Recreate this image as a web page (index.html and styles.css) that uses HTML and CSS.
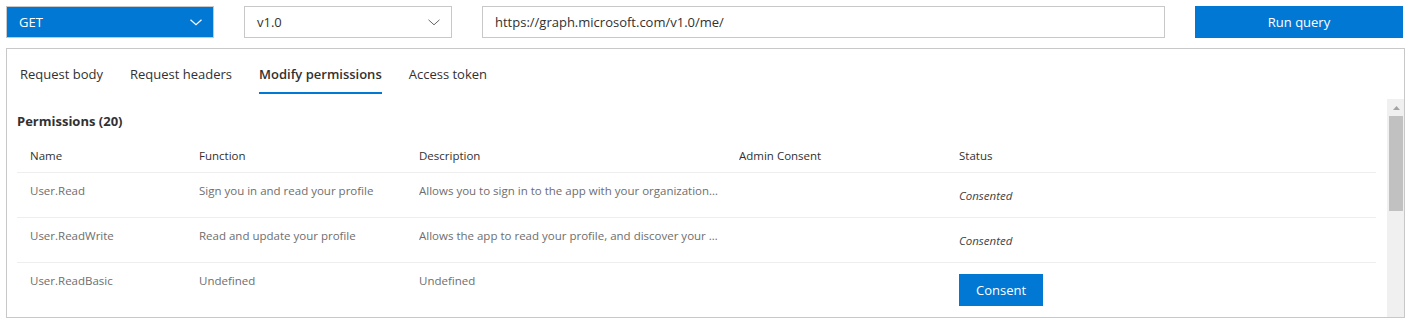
FILE: index.html
```html
<!DOCTYPE html>
<html lang="en">
<head>
<meta charset="utf-8">
<title>Graph Explorer</title>
<link rel="stylesheet" href="styles.css">
</head>
<body>
<div class="app">
  <div class="querybar">
    <div class="dropdown method">
      <span>GET</span>
      <svg class="chev" width="12" height="7" viewBox="0 0 12 7"><polyline points="0.5,0.8 6,5.8 11.5,0.8" fill="none" stroke="#ffffff" stroke-width="1.2"/></svg>
    </div>
    <div class="dropdown version">
      <span>v1.0</span>
      <svg class="chev" width="12" height="7" viewBox="0 0 12 7"><polyline points="0.5,0.8 6,5.8 11.5,0.8" fill="none" stroke="#666666" stroke-width="1"/></svg>
    </div>
    <div class="url">https://graph.microsoft.com/v1.0/me/</div>
    <button class="run">Run query</button>
  </div>

  <div class="panel">
    <div class="tabs">
      <div class="tab">Request body</div>
      <div class="tab">Request headers</div>
      <div class="tab active">Modify permissions</div>
      <div class="tab">Access token</div>
    </div>
    <div class="body">
      <div class="content">
        <div class="perm-title">Permissions (20)</div>
        <div class="table">
          <div class="row head">
            <div class="cell">Name</div>
            <div class="cell">Function</div>
            <div class="cell">Description</div>
            <div class="cell">Admin Consent</div>
            <div class="cell">Status</div>
          </div>
          <div class="row">
            <div class="cell">User.Read</div>
            <div class="cell">Sign you in and read your profile</div>
            <div class="cell desc">Allows you to sign in to the app with your organization…</div>
            <div class="cell"></div>
            <div class="cell status"><span class="consented">Consented</span></div>
          </div>
          <div class="row">
            <div class="cell">User.ReadWrite</div>
            <div class="cell">Read and update your profile</div>
            <div class="cell desc">Allows the app to read your profile, and discover your …</div>
            <div class="cell"></div>
            <div class="cell status"><span class="consented">Consented</span></div>
          </div>
          <div class="row last">
            <div class="cell">User.ReadBasic</div>
            <div class="cell">Undefined</div>
            <div class="cell desc">Undefined</div>
            <div class="cell"></div>
            <div class="cell status"><button class="consent">Consent</button></div>
          </div>
        </div>
      </div>
      <div class="scrollbar">
        <div class="arrow"><svg width="7" height="4" viewBox="0 0 7 4"><polygon points="0,4 3.5,0 7,4" fill="#a3a3a3"/></svg></div>
        <div class="thumb"></div>
      </div>
    </div>
  </div>
</div>
</body>
</html>
```

FILE: styles.css
```css
* { box-sizing: border-box; }

html, body {
  margin: 0;
  padding: 0;
  background: #ffffff;
}

body {
  font-family: "Open Sans", "Noto Sans", sans-serif;
  font-size: 13px;
  color: #323130;
  overflow: hidden;
}

.app {
  padding: 6px 0 0 6px;
  width: 1406px;
  height: 319px;
}

.querybar {
  display: flex;
  gap: 30px;
  height: 32px;
}

.dropdown {
  width: 208px;
  height: 32px;
  border: 1px solid #c8c8c8;
  display: flex;
  align-items: center;
  justify-content: space-between;
  padding: 0 11px 0 12px;
  font-size: 13px;
}

.method {
  background: #0078d4;
  color: #ffffff;
}

.version {
  background: #ffffff;
  color: #323130;
}

.chev { display: block; margin-top: 1px; }

.url {
  width: 683px;
  height: 32px;
  border: 1px solid #c8c8c8;
  padding: 0 12px;
  display: flex;
  align-items: center;
  font-size: 13px;
  color: #323130;
}

.run {
  width: 208px;
  height: 32px;
  border: 0;
  background: #0078d4;
  color: #ffffff;
  font-family: inherit;
  font-size: 13px;
  padding: 0;
  margin: 0;
}

.panel {
  margin-top: 10px;
  width: 1399px;
  height: 270px;
  border: 1px solid #c8c8c8;
  display: flex;
  flex-direction: column;
}

.tabs {
  display: flex;
  gap: 27px;
  padding: 1px 0 0 13px;
  height: 45px;
  flex: none;
}

.tab {
  position: relative;
  height: 44px;
  padding-top: 4px;
  line-height: 40px;
  font-size: 13px;
  color: #323130;
  white-space: nowrap;
}

.tab.active {
  font-weight: 600;
}

.tab.active::after {
  content: "";
  position: absolute;
  left: 0;
  right: 0;
  bottom: 0;
  height: 2px;
  background: #0078d4;
}

.body {
  margin-top: 5px;
  flex: 1;
  display: flex;
  overflow: hidden;
}

.content {
  flex: 1;
  padding: 12px 11px 0 10px;
  overflow: hidden;
}

.perm-title {
  font-size: 13px;
  font-weight: 700;
  line-height: 20px;
  color: #323130;
}

.table {
  margin-top: 9px;
}

.row {
  display: grid;
  grid-template-columns: 169px 220px 320px 220px 1fr;
  padding-left: 13px;
  height: 45px;
  border-bottom: 1px solid #eeeeee;
  font-size: 11.5px;
  color: #6e6e6e;
}

.row.head {
  height: 33px;
  color: #323130;
}

.row.head .cell {
  line-height: 32px;
  padding-top: 0;
}

.row.last {
  border-bottom: 0;
}

.cell {
  padding-top: 10px;
  line-height: 16px;
  white-space: nowrap;
  overflow: hidden;
}

.cell.desc {
  padding-right: 12px;
  text-overflow: ellipsis;
}

.cell.status {
  padding-top: 7px;
  line-height: 32px;
}

.consented {
  font-style: italic;
  color: #444444;
}

.consent {
  display: block;
  margin-top: 4px;
  width: 84px;
  height: 32px;
  border: 0;
  padding: 0;
  background: #0078d4;
  color: #ffffff;
  font-family: inherit;
  font-size: 13px;
}

.scrollbar {
  width: 17px;
  flex: none;
  background: #f0f0f0;
  display: flex;
  flex-direction: column;
}

.arrow {
  height: 17px;
  display: flex;
  align-items: center;
  justify-content: center;
  padding-left: 1px;
}

.arrow svg { display: block; }

.thumb {
  height: 95px;
  margin: 0 1px 0 2px;
  background: #c1c1c1;
}
```
